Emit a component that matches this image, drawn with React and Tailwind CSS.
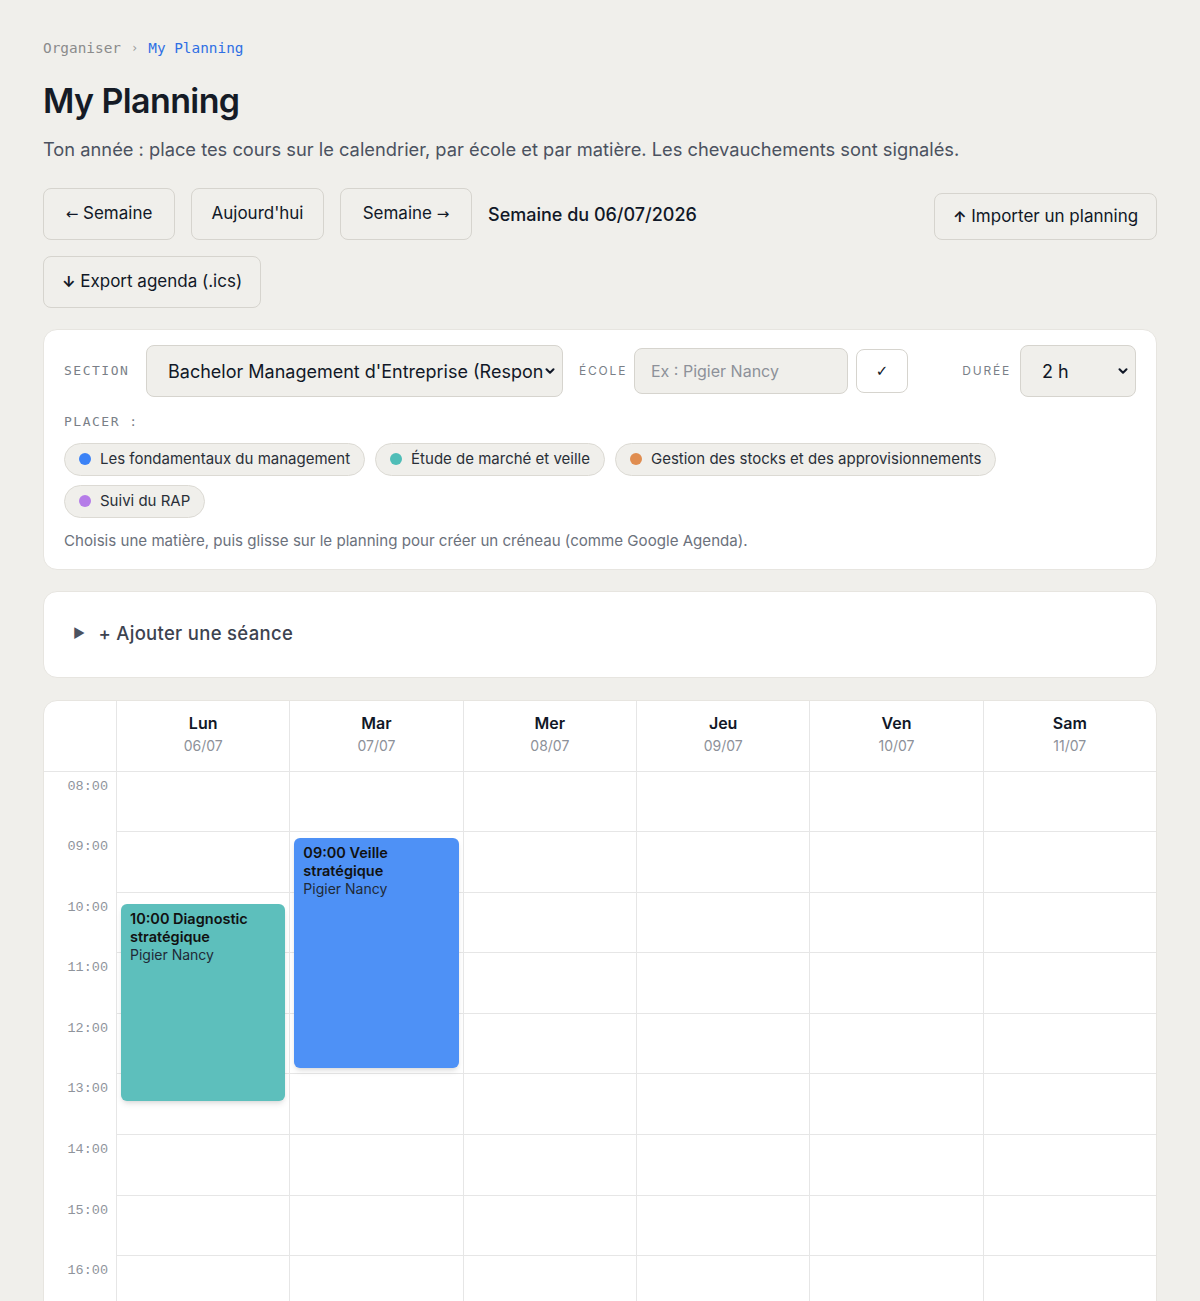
import React from "react";

const subjects = [
  { name: "Les fondamentaux du management", dot: "bg-[#3b82f6]" },
  { name: "Étude de marché et veille", dot: "bg-[#4fbdb7]" },
  { name: "Gestion des stocks et des approvisionnements", dot: "bg-[#e08d50]" },
  { name: "Suivi du RAP", dot: "bg-[#b57ce8]" },
];

const days = [
  { name: "Lun", date: "06/07" },
  { name: "Mar", date: "07/07" },
  { name: "Mer", date: "08/07" },
  { name: "Jeu", date: "09/07" },
  { name: "Ven", date: "10/07" },
  { name: "Sam", date: "11/07" },
];

const hours = ["08:00", "09:00", "10:00", "11:00", "12:00", "13:00", "14:00", "15:00", "16:00", "17:00", "18:00"];

const events = {
  0: { title: "10:00 Diagnostic stratégique", school: "Pigier Nancy", top: "top-[132px]", height: "h-[197px]", color: "bg-[#5dbfbc]" },
  1: { title: "09:00 Veille stratégique", school: "Pigier Nancy", top: "top-[66px]", height: "h-[230px]", color: "bg-[#4e91f6]" },
};

const Chevron = () => (
  <svg width="14" height="14" viewBox="0 0 24 24" fill="none" stroke="#111827" strokeWidth="3.5" strokeLinecap="round" strokeLinejoin="round">
    <path d="M6 9l6 6 6-6" />
  </svg>
);

const Btn = ({ children, className = "" }) => (
  <button className={`h-[52px] rounded-lg border border-[#d6d4ce] bg-[#f0efeb] text-[17px] text-[#111827] ${className}`}>
    {children}
  </button>
);

const Arrow = ({ children }) => (
  <span className="font-['DejaVu_Sans',sans-serif] text-[15px] font-normal">{children}</span>
);

export default function App() {
  const mono = "font-['DejaVu_Sans_Mono',monospace]";
  return (
    <div className="min-h-screen bg-[#f0efeb] px-[43px] pt-[38px] pb-10 font-['Inter',sans-serif] text-[#111827]">
      <div className={`${mono} text-[14.4px] leading-5 flex items-center gap-[10px]`}>
        <span className="text-[#8b8b8b]">Organiser</span>
        <span className="text-[#9a9a9a] text-[12px]">›</span>
        <span className="text-[#2f6fe4]">My Planning</span>
      </div>

      <h1 className="mt-[21px] text-[34px] leading-[44px] font-semibold tracking-[-0.6px] text-[#151b26]">My Planning</h1>
      <p className="mt-[12px] text-[18.3px] leading-7 text-[#4b5260]">
        Ton année : place tes cours sur le calendrier, par école et par matière. Les chevauchements sont signalés.
      </p>

      <div className="mt-[25px] flex flex-wrap items-center gap-4">
        <Btn className="w-[132px]"><Arrow>←</Arrow> Semaine</Btn>
        <Btn className="w-[133px]">Aujourd'hui</Btn>
        <Btn className="w-[132px]">Semaine <Arrow>→</Arrow></Btn>
        <span className="text-[18px] font-medium">Semaine du 06/07/2026</span>
        <Btn className="ml-auto !h-[47px] mt-[5px] w-[223px]"><span className="font-bold text-[15px]">↑</span> Importer un planning</Btn>
      </div>
      <div className="mt-4">
        <Btn className="w-[218px]"><span className="font-bold text-[15px]">↓</span> Export agenda (.ics)</Btn>
      </div>

      <div className="mt-[21px] bg-white rounded-[14px] border border-[#e7e5e0] px-5 pt-[15px] pb-[17px]">
        <div className="flex items-center">
          <span className={`${mono} text-[13px] tracking-[1.5px] text-[#7a7f88] w-[82px]`}>SECTION</span>
          <div className="flex items-center w-[417px] h-[52px] rounded-lg border border-[#d6d4ce] bg-[#f0efeb] pl-[21px] pr-[5px]">
            <span className="flex-1 overflow-hidden whitespace-nowrap text-[18px]">Bachelor Management d'Entreprise (Responsable de Développement)</span>
            <Chevron />
          </div>
          <span className="ml-4 text-[12px] tracking-[1.8px] text-[#7a7f88] w-[55px]">ÉCOLE</span>
          <div className="flex items-center w-[214px] h-[46px] rounded-lg border border-[#d6d4ce] bg-[#f0efeb] pl-4 text-[16px] text-[#8d9199]">
            Ex : Pigier Nancy
          </div>
          <button className="ml-2 w-[52px] h-[44px] rounded-lg border border-[#d6d4ce] bg-white font-['DejaVu_Sans',sans-serif] text-[15px]">✓</button>
          <span className="ml-auto text-[12px] tracking-[1.8px] text-[#7a7f88] mr-[9px]">DURÉE</span>
          <div className="flex items-center w-[116px] h-[52px] rounded-lg border border-[#d6d4ce] bg-[#f0efeb] pl-[21px] pr-[5px]">
            <span className="flex-1 text-[18px]">2 h</span>
            <Chevron />
          </div>
        </div>

        <div className={`${mono} mt-[15px] text-[13px] tracking-[1.5px] text-[#7a7f88]`}>PLACER :</div>
        <div className="mt-[11px] flex flex-wrap gap-x-[10px] gap-y-[9px]">
          {subjects.map((s) => (
            <span key={s.name} className="h-[33px] flex items-center gap-[9px] pl-[14px] pr-[14px] rounded-full border border-[#dcdad4] bg-[#f0efeb] text-[15px] text-[#2a2f38]">
              <span className={`w-3 h-3 rounded-full ${s.dot}`}></span>
              {s.name}
            </span>
          ))}
        </div>
        <p className="mt-[12px] text-[15.1px] leading-[22px] text-[#6b717c]">
          Choisis une matière, puis glisse sur le planning pour créer un créneau (comme Google Agenda).
        </p>
      </div>

      <div className="mt-[21px] bg-white rounded-[14px] border border-[#e7e5e0] h-[87px] flex items-center px-[29px] gap-[13px] text-[18.5px] font-medium tracking-[0.3px] text-[#3d4350]">
        <span className="text-[13px] text-[#4b5260]">▶</span>
        <span>+ Ajouter une séance</span>
      </div>

      <div className="mt-[22px] bg-white rounded-t-[14px] border border-[#e7e5e0] overflow-hidden">
        <div className="flex border-b border-[#e6e6e6]">
          <div className="w-[72px] shrink-0 h-[70px]"></div>
          {days.map((d) => (
            <div key={d.name} className="flex-1 border-l border-[#e6e6e6] h-[70px] flex flex-col items-center pt-[10px]">
              <span className="text-[16px] font-semibold leading-6">{d.name}</span>
              <span className="text-[14px] text-[#8d9199] leading-5 mt-[1px]">{d.date}</span>
            </div>
          ))}
        </div>
        <div className="flex">
          <div className="w-[72px] shrink-0">
            {hours.map((h) => (
              <div key={h} className="h-[60.6px] text-right pr-[8px] pt-[5px] font-['Liberation_Mono',monospace] text-[13.5px] text-[#8f949c]">
                {h}
              </div>
            ))}
          </div>
          {days.map((d, i) => (
            <div key={d.name} className="relative flex-1 border-l border-[#e6e6e6]">
              {hours.map((h) => (
                <div key={h} className="h-[60.6px] border-b border-[#e6e6e6]"></div>
              ))}
              {events[i] && (
                <div className={`absolute left-[4px] right-[4px] ${events[i].top} ${events[i].height} ${events[i].color} rounded-md shadow-md px-[9px] pt-[6px]`}>
                  <div className="text-[14.5px] font-semibold leading-[18px] text-[#111]">{events[i].title}</div>
                  <div className="text-[14px] leading-[18px] text-[#1f2a37]">{events[i].school}</div>
                </div>
              )}
            </div>
          ))}
        </div>
      </div>
    </div>
  );
}
